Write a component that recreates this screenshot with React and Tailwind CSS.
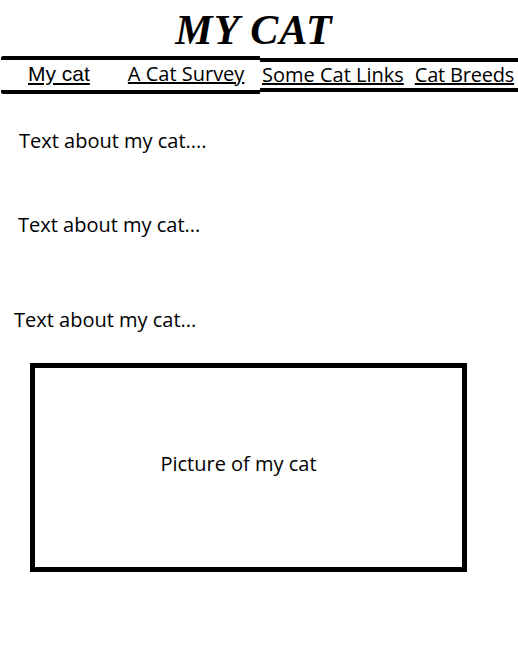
export default function App() {
  return (
    <div className="w-[518px] h-[661px] bg-white text-black overflow-hidden">
      <h1 className="h-[56px] pt-[9px] text-center font-['Liberation_Serif',serif] italic font-bold text-[42px] leading-[42px] tracking-[1px] pr-[10px]">
        MY CAT
      </h1>

      <nav className="flex items-start font-['Open_Sans',sans-serif] text-[20px] leading-[26px]">
        <div className="ml-[1px] w-[259px] h-[38px] border-y-4 border-black rounded-l-[2px] flex pt-[1px]">
          <a href="#" className="ml-[27px] underline font-['Liberation_Sans',sans-serif] text-[21px]">
            My cat
          </a>
          <a href="#" className="ml-[38px] underline">
            A Cat Survey
          </a>
        </div>
        <div className="flex-1 mt-[2px] h-[34px] border-y-4 border-black flex">
          <a href="#" className="ml-[2px] underline">
            Some Cat Links
          </a>
          <a href="#" className="ml-[11px] underline tracking-[-0.2px]">
            Cat Breeds
          </a>
        </div>
      </nav>

      <main className="font-['Open_Sans',sans-serif] text-[20px] leading-[28px]">
        <p className="ml-[19px] mt-[33px]">Text about my cat....</p>
        <p className="ml-[18px] mt-[56px]">Text about my cat...</p>
        <p className="ml-[14px] mt-[67px]">Text about my cat...</p>

        <div className="ml-[30px] mt-[29px] w-[437px] h-[209px] border-[5px] border-black flex items-center justify-center pr-[20px] pb-[8px]">
          Picture of my cat
        </div>
      </main>
    </div>
  );
}
